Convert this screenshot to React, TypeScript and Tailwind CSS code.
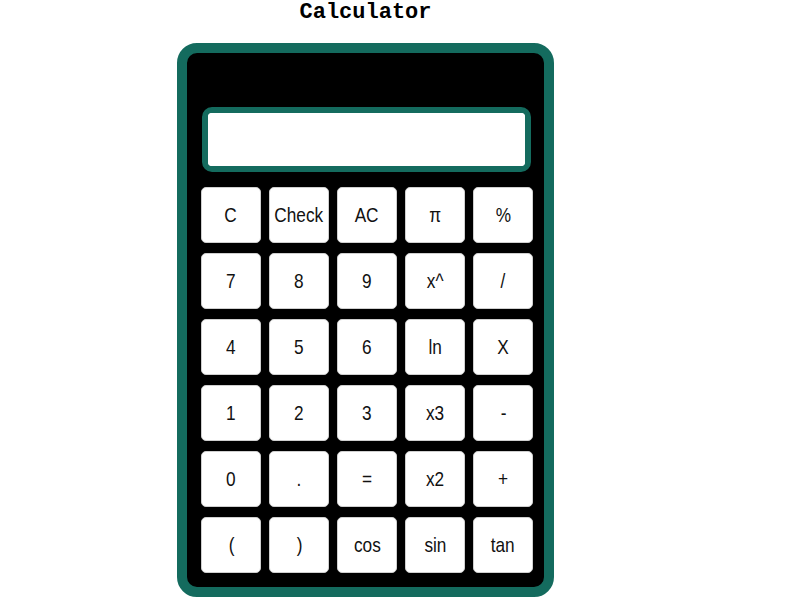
import React from 'react';

const rows: string[][] = [
  ['C', 'Check', 'AC', 'π', '%'],
  ['7', '8', '9', 'x^', '/'],
  ['4', '5', '6', 'ln', 'X'],
  ['1', '2', '3', 'x3', '-'],
  ['0', '.', '=', 'x2', '+'],
  ['(', ')', 'cos', 'sin', 'tan'],
];

export default function App() {
  return (
    <div className="min-h-[600px] bg-white pl-[177px]">
      <div className="w-[377px]">
        <h1 className="text-center font-['Liberation_Mono','Courier_New',monospace] text-[22px] font-bold leading-[26px] text-black">
          Calculator
        </h1>

        {/* calculator body */}
        <div className="mt-[17px] h-[554px] rounded-[20px] border-[10px] border-[#146b5e] bg-black pl-[14px] pr-[11px] pt-[54px]">
          <div className="ml-px h-[65px] w-[329px] rounded-[10px] border-[6px] border-[#146b5e] bg-white">
            <input
              type="text"
              className="h-full w-full rounded-[4px] bg-white px-2 outline-none"
            />
          </div>

          <div className="mt-[15px] grid grid-cols-[repeat(5,60px)] gap-x-[8px] gap-y-[10px]">
            {rows.flat().map((k, i) => (
              <button
                key={i}
                className="flex h-[56px] items-center justify-center rounded-[5px] border border-[#cfcfcf] bg-white font-['Liberation_Sans',Arial,sans-serif] text-[21px] text-[#111]"
              >
                <span className="inline-block scale-x-[0.82] whitespace-nowrap">{k}</span>
              </button>
            ))}
          </div>
        </div>
      </div>
    </div>
  );
}
